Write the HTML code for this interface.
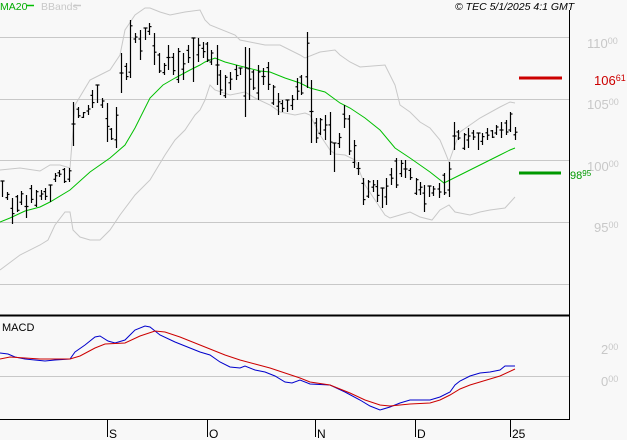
<!DOCTYPE html>
<html><head><meta charset="utf-8"><style>
html,body{margin:0;padding:0;background:#f8f8f8;}
svg{display:block;font-family:"Liberation Sans",sans-serif;}
</style></head><body>
<svg id="s" width="627" height="440" viewBox="0 0 627 440" xmlns="http://www.w3.org/2000/svg">
<rect width="627" height="440" fill="#f8f8f8"/>
<g stroke="#c8c8c8" stroke-width="1">
<line x1="0" y1="37.5" x2="569" y2="37.5"/>
<line x1="0" y1="99.5" x2="569" y2="99.5"/>
<line x1="0" y1="160.5" x2="569" y2="160.5"/>
<line x1="0" y1="222.5" x2="569" y2="222.5"/>
<line x1="0" y1="284.5" x2="569" y2="284.5"/>
<line x1="0" y1="376.5" x2="569" y2="376.5"/>
</g>
<g fill="none" stroke="#c8c8c8" stroke-width="1">
<polyline points="0,170 20,168 40,171 50,165 60,165 70,168 75,105 90,80 100,75 110,70 120,55 125,30 135,15 145,8 150,8 160,12 170,15 185,12 200,10 205,20 210,25 235,35 240,40 255,43 265,45 280,45 300,55 305,58 320,52 335,50 340,55 350,62 360,67 385,65 395,85 400,105 410,112 420,122 430,128 440,140 445,152 449,162 455,145 460,132 480,118 500,107 510,102 515,103"/>
<polyline points="0,270 20,255 40,245 48,240 55,225 65,212 70,212 73,230 80,237 90,240 100,240 110,230 120,215 135,195 150,180 165,155 175,140 185,130 195,115 200,110 205,100 210,85 215,90 230,95 245,92 255,98 270,105 280,112 295,115 305,113 310,115 320,135 330,150 335,154 345,155 355,160 365,185 375,200 385,215 390,218 400,215 410,212 420,217 432,220 440,210 449,205 455,212 470,215 480,212 490,210 505,208 515,197"/>
</g>
<polyline fill="none" stroke="#00c000" stroke-width="1" points="0,222 10,218 25,211 40,207 50,202 70,190 90,172 110,158 125,145 135,128 150,98 163,85 175,78 190,70 200,65 205,62 215,58 225,62 240,66 260,71 270,72 285,78 300,83 310,88 325,92 340,103 350,108 365,118 380,130 395,148 410,158 420,165 430,172 444,183 460,175 480,165 490,160 500,155 510,150 515,148"/>
<g id="bars" stroke="#000" stroke-width="1.2" fill="none"></g>
<line x1="519" y1="78" x2="562" y2="78" stroke="#cc0000" stroke-width="3"/>
<line x1="519" y1="173" x2="561" y2="173" stroke="#009900" stroke-width="3"/>
<line x1="569.5" y1="10" x2="569.5" y2="420" stroke="#000" stroke-width="1"/>
<line x1="0" y1="315.5" x2="569" y2="315.5" stroke="#000" stroke-width="2"/>
<line x1="0" y1="419.5" x2="570" y2="419.5" stroke="#000" stroke-width="1"/>
<g stroke="#000" stroke-width="1">
<line x1="107.5" y1="420" x2="107.5" y2="437"/>
<line x1="207.5" y1="420" x2="207.5" y2="437"/>
<line x1="315.5" y1="420" x2="315.5" y2="437"/>
<line x1="415.5" y1="420" x2="415.5" y2="437"/>
<line x1="510.5" y1="420" x2="510.5" y2="437"/>
</g>
<g font-size="12" fill="#000">
<text x="109" y="438">S</text><text x="209" y="438">O</text><text x="317" y="438">N</text><text x="417" y="438">D</text><text x="512" y="438">25</text>
</g>
<polyline fill="none" stroke="#0000cc" stroke-width="1" points="0,353 8,354 15,357 25,359 35,360 45,361 55,360 70,359 75,352 85,345 95,337 100,336 108,341 115,343 125,340 135,330 145,326 150,327 160,335 175,342 190,348 200,352 210,355 220,362 230,367 240,368 245,366 255,370 265,372 275,376 285,382 292,383 300,380 310,384 330,385 345,392 360,400 370,406 380,410 390,407 400,403 410,400 430,400 440,397 450,392 455,385 460,381 470,376 480,373 490,372 500,370 505,366 515,366"/>
<polyline fill="none" stroke="#cc0000" stroke-width="1" points="0,359 10,357 25,358 40,359 55,359 70,359 80,356 95,348 105,344 125,343 140,336 155,331 165,332 180,337 195,343 210,349 225,355 240,360 255,364 270,368 285,373 300,378 310,382 330,385 350,393 365,400 380,405 390,406 400,405 410,404 430,403 440,400 450,395 460,389 470,385 480,382 490,379 500,376 515,369"/>
<text x="2" y="331" font-size="11" fill="#000">MACD</text>
<g font-size="10.5">
<text x="0" y="10" fill="#00aa00">MA20</text>
<line x1="27" y1="5.5" x2="34" y2="5.5" stroke="#00c000" stroke-width="1.5"/>
<text x="41" y="10" fill="#c8c8c8">BBands</text>
<line x1="74" y1="5.5" x2="81" y2="5.5" stroke="#c8c8c8" stroke-width="1.5"/>
<text x="455" y="10" fill="#000" font-style="italic">© TEC 5/1/2025 4:1 GMT</text>
</g>
<g fill="#c8c8c8" font-size="13">
<text x="587" y="48">110<tspan font-size="9" dy="-4">00</tspan></text>
<text x="587" y="109">105<tspan font-size="9" dy="-4">00</tspan></text>
<text x="587" y="171">100<tspan font-size="9" dy="-4">00</tspan></text>
<text x="594" y="232">95<tspan font-size="9" dy="-4">00</tspan></text>
<text x="601" y="354">2<tspan font-size="9" dy="-4">00</tspan></text>
<text x="601" y="386">0<tspan font-size="9" dy="-4">00</tspan></text>
</g>
<text x="594" y="85" font-size="13" fill="#cc0000">106<tspan font-size="9" dy="-4">61</tspan></text>
<text x="570" y="179" font-size="11" fill="#009900">98<tspan font-size="8" dy="-3">95</tspan></text>
</svg>
<script>
var b=[[2,181,197],[7,192,200],[12,198,224],[17,195,212],[21,191,205],[26,195,218],[31,185,203],[36,190,207],[41,190,200],[45,188,200],[50,185,202],[55,173,182],[59,170,177],[64,168,183],[69,168,182],[73,102,146],[78,107,118],[83,112,118],[88,105,115],[92,90,108],[97,85,103],[102,98,108],[107,103,142],[111,128,140],[116,107,148],[121,53,93],[126,63,80],[130,20,78],[135,33,43],[140,30,60],[145,28,40],[149,23,35],[154,33,65],[159,53,73],[164,63,75],[168,45,70],[173,53,75],[178,48,83],[183,53,80],[188,45,63],[193,38,82],[198,38,62],[203,42,58],[207,42,62],[211,50,65],[217,45,85],[220,70,95],[225,75,98],[230,72,90],[236,65,80],[240,68,75],[245,47,117],[249,48,100],[253,70,90],[258,65,100],[263,68,85],[268,62,90],[273,85,105],[278,93,115],[282,100,112],[287,100,112],[292,95,110],[297,78,100],[301,75,95],[307,32,88],[311,80,143],[316,118,143],[320,118,135],[325,115,140],[330,112,155],[334,143,172],[339,133,148],[344,105,128],[349,115,155],[354,140,168],[358,162,175],[363,178,205],[368,180,198],[373,180,192],[377,180,202],[382,188,208],[386,178,205],[391,168,185],[396,158,188],[401,160,177],[405,160,178],[410,168,180],[416,178,195],[420,182,195],[424,185,212],[429,186,197],[433,186,196],[439,183,198],[444,173,195],[449,162,197],[454,122,150],[458,130,140],[464,133,150],[468,128,148],[473,130,140],[478,133,150],[482,133,145],[487,128,140],[492,130,138],[496,125,135],[501,122,138],[506,120,135],[510,112,132],[515,127,140]];
var g=document.getElementById('bars'),h='';
b.forEach(function(d,i){var x=d[0]+.5,t=d[1],bo=d[2];var o=t+(bo-t)*((i*37%10)/10),c=t+(bo-t)*((i*53%10)/10);
h+='<line x1="'+x+'" y1="'+t+'" x2="'+x+'" y2="'+bo+'"/><line x1="'+(x-2)+'" y1="'+o+'" x2="'+x+'" y2="'+o+'"/><line x1="'+x+'" y1="'+c+'" x2="'+(x+2)+'" y2="'+c+'"/>';});
g.innerHTML=h;
</script>
</body></html>
